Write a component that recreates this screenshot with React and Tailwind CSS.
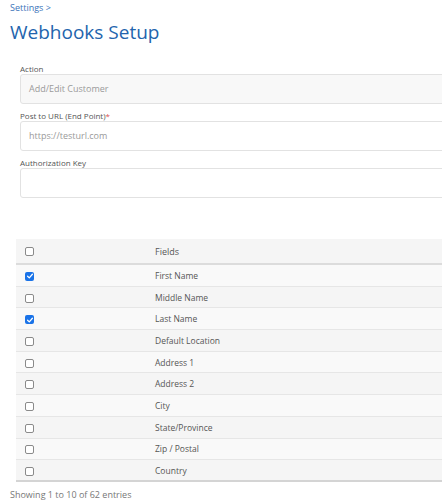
import React from "react";

const rows = [
  { name: "First Name", checked: true },
  { name: "Middle Name", checked: false },
  { name: "Last Name", checked: true },
  { name: "Default Location", checked: false },
  { name: "Address 1", checked: false },
  { name: "Address 2", checked: false },
  { name: "City", checked: false },
  { name: "State/Province", checked: false },
  { name: "Zip / Postal", checked: false },
  { name: "Country", checked: false },
];

function Box({ checked }) {
  if (checked) {
    return (
      <span className="flex h-[9px] w-[9px] items-center justify-center rounded-[2px] bg-[#1a73e8]">
        <svg viewBox="0 0 10 10" className="h-[8px] w-[8px]">
          <path d="M2 5.3 L4.1 7.3 L8 2.8" fill="none" stroke="white" strokeWidth="1.6" strokeLinecap="round" strokeLinejoin="round" />
        </svg>
      </span>
    );
  }
  return <span className="block h-[9px] w-[9px] rounded-[2px] border border-[#8a8a8a] bg-white" />;
}

function Field({ label, required, placeholder, disabled, mt }) {
  return (
    <div className={mt}>
      <div className="h-[10px] text-[8px] leading-[10px] text-[#555]">
        {label}
        {required && <span className="text-[#d9534f]">*</span>}
      </div>
      <div
        className={`flex h-[30px] w-[520px] items-center rounded-[3px] border border-[#e2e2e2] pl-[8px] text-[9px] text-[#9a9a9a] ${
          disabled ? "bg-[#f8f8f8]" : "bg-white"
        }`}
      >
        {placeholder}
      </div>
    </div>
  );
}

export default function App() {
  return (
    <div className="h-[500px] w-[442px] overflow-hidden bg-white" style={{ fontFamily: '"Open Sans", sans-serif' }}>
      <div className="pl-[10px] pt-[2px]">
        <div className="h-[12px] text-[9px] leading-[12px] text-[#3b73b9]">Settings &gt;</div>
        <h1 className="mt-[6px] h-[24px] text-[19px] leading-[24px] text-[#2364ad]">Webhooks Setup</h1>
      </div>
      <div className="mt-[20px] pl-[20px]">
        <Field label="Action" placeholder="Add/Edit Customer" disabled />
        <Field label="Post to URL (End Point)" required placeholder="https://testurl.com" mt="mt-[7px]" />
        <Field label="Authorization Key" placeholder="" mt="mt-[7px]" />
      </div>
      <div className="ml-[16px] mt-[41px] w-[520px]">
        <div className="flex h-[26px] items-center border-b-2 border-[#dcdcdc] bg-[#f5f5f5] pt-[1px]">
          <div className="flex w-[139px] justify-start pl-[9px]">
            <Box checked={false} />
          </div>
          <div className="text-[9px] text-[#555]">Fields</div>
        </div>
        {rows.map((r, i) => (
          <div
            key={r.name}
            className={`flex h-[21.7px] items-center pt-[2px] ${
              i === rows.length - 1 ? "border-b-2 border-[#d4d4d4]" : "border-b border-[#e6e6e6]"
            } ${i % 2 === 0 ? "bg-[#f9f9f9]" : "bg-[#f5f5f5]"}`}
          >
            <div className="flex w-[139px] justify-start pl-[9px]">
              <Box checked={r.checked} />
            </div>
            <div className="text-[8.5px] text-[#555]">{r.name}</div>
          </div>
        ))}
      </div>
      <div className="mt-[7px] pl-[10px] text-[9px] leading-[12px] text-[#777]">Showing 1 to 10 of 62 entries</div>
    </div>
  );
}
